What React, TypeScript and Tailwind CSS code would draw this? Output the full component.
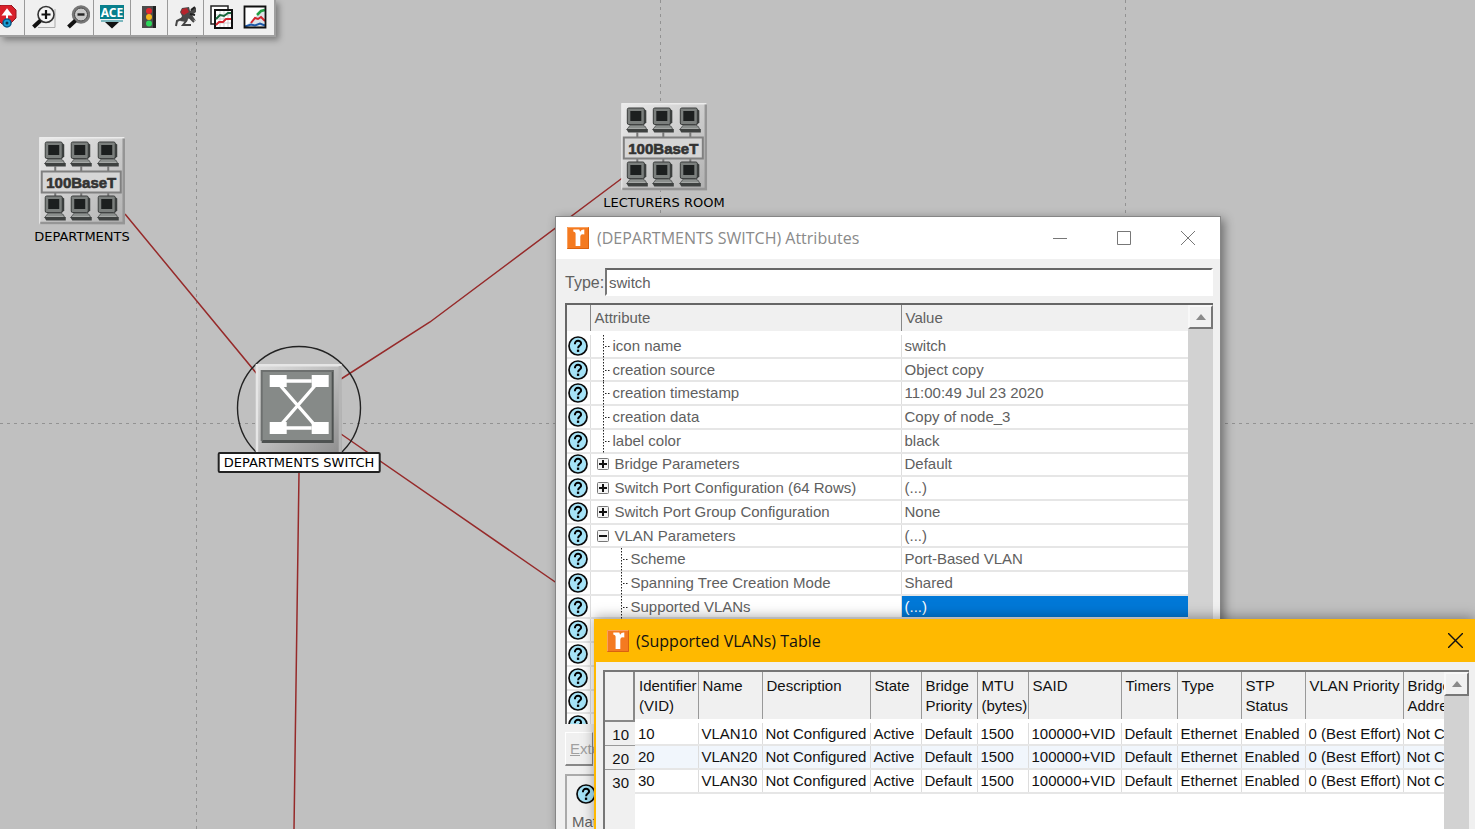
import type { ReactNode } from 'react';

type AttributeRow = {
    name: string;
    value: string;
    kind?: 'leaf' | 'plus' | 'minus' | 'child';
    selected?: boolean;
};

const attributes: AttributeRow[] = [
    { name: 'icon name', value: 'switch', kind: 'leaf' },
    { name: 'creation source', value: 'Object copy', kind: 'leaf' },
    { name: 'creation timestamp', value: '11:00:49 Jul 23 2020', kind: 'leaf' },
    { name: 'creation data', value: 'Copy of node_3', kind: 'leaf' },
    { name: 'label color', value: 'black', kind: 'leaf' },
    { name: 'Bridge Parameters', value: 'Default', kind: 'plus' },
    { name: 'Switch Port Configuration (64 Rows)', value: '(...)', kind: 'plus' },
    { name: 'Switch Port Group Configuration', value: 'None', kind: 'plus' },
    { name: 'VLAN Parameters', value: '(...)', kind: 'minus' },
    { name: 'Scheme', value: 'Port-Based VLAN', kind: 'child' },
    { name: 'Spanning Tree Creation Mode', value: 'Shared', kind: 'child' },
    { name: 'Supported VLANs', value: '(...)', kind: 'child', selected: true },
    { name: '', value: '' },
    { name: '', value: '' },
    { name: '', value: '' },
    { name: '', value: '' },
    { name: '', value: '' },
];

const vlanColumns = [
    { title: 'Identifier (VID)', width: 'w-[63px]' },
    { title: 'Name', width: 'w-[64px]' },
    { title: 'Description', width: 'w-[108px]' },
    { title: 'State', width: 'w-[51px]' },
    { title: 'Bridge Priority', width: 'w-[56px]' },
    { title: 'MTU (bytes)', width: 'w-[51px]' },
    { title: 'SAID', width: 'w-[93px]' },
    { title: 'Timers', width: 'w-[56px]' },
    { title: 'Type', width: 'w-[64px]' },
    { title: 'STP Status', width: 'w-[64px]' },
    { title: 'VLAN Priority', width: 'w-[98px]' },
    { title: 'Bridge Address', width: 'w-[72px]' },
];

const vlans = ['10', '20', '30'].map((id) => [
    id,
    `VLAN${id}`,
    'Not Configured',
    'Active',
    'Default',
    '1500',
    '100000+VID',
    'Default',
    'Ethernet',
    'Enabled',
    '0 (Best Effort)',
    'Not C',
]);

function HelpIcon() {
    return (
        <svg viewBox="0 0 20 20" className="size-5 shrink-0" aria-hidden="true">
            <circle cx="10" cy="10" r="9" fill="#a5e3f7" stroke="#0b0b0b" strokeWidth="1.7" />
            <path d="M6.9 8.2C6.7 3.6 13.3 3.7 13.1 7.6C13 9.6 10.2 9.6 10.1 12.2" fill="none" stroke="#000" strokeWidth="2" />
            <rect x="8.9" y="13.6" width="2.3" height="2.3" fill="#000" />
        </svg>
    );
}

function AppIcon() {
    return (
        <svg viewBox="0 0 22 22" className="size-[22px] shrink-0" aria-hidden="true">
            <rect width="22" height="22" fill="#f47a20" />
            <path d="M.5 21.5V.5h21" fill="none" stroke="#f9a15f" />
            <path d="M21.5 .5v21H.5" fill="none" stroke="#d9620f" />
            <path d="M6.300 2.500h6l.8 2.300Q14.500 2.300 17.300 2.600V7.400Q13.400 6.600 13.300 9.500V19H8.600V6.500Q8.600 4.800 6.300 4.400z" fill="#fff" />
        </svg>
    );
}

function Monitor({ x, y }: { x: number; y: number }) {
    return (
        <g transform={`translate(${x} ${y})`}>
            <path d="M17 1l3 2v12l-3 3z" fill="#3b3e3d" />
            <rect x="1" y=".5" width="17" height="16.500" rx="1.500" fill="#7b7f7d" stroke="#3a3d3c" />
            <rect x="4" y="3.500" width="11" height="10" fill="#1c1f1f" />
            <path d="M4 17.500h12l3 1.500 1.500 3H.5z" fill="#8b8f8d" stroke="#4a4d4c" strokeWidth=".8" />
            <path d="M0 21.500h21.500v3.500H2z" fill="#3e4140" />
            <path d="M2 21h17" stroke="#a5a8a6" />
        </g>
    );
}

function LanIcon() {
    return (
        <svg viewBox="0 0 86 87" className="h-[88px] w-[86px]" role="img" aria-label="100BaseT LAN">
            <defs>
                <linearGradient id="lan" x1="0" y1="0" x2="1" y2="1">
                    <stop offset="0" stopColor="#ebebeb" />
                    <stop offset="1" stopColor="#b0b0b0" />
                </linearGradient>
            </defs>
            <rect width="86" height="87" fill="url(#lan)" />
            <path d="M0 86V0h85" fill="none" stroke="#ececec" strokeWidth="2" />
            <path d="M84.500 1v84.500H1" fill="none" stroke="#959595" strokeWidth="2.500" />
            <path d="M16 29v5M42 29v5M69 29v5M16 54v5M42 54v5M69 54v5" stroke="#777" strokeWidth="2" />
            <Monitor x={5} y={4} />
            <Monitor x={31} y={4} />
            <Monitor x={58} y={4} />
            <Monitor x={5} y={58} />
            <Monitor x={31} y={58} />
            <Monitor x={58} y={58} />
            <rect x="2.500" y="34" width="79" height="21" fill="#d6d6d6" stroke="#808080" strokeWidth="2" />
            <text x="42" y="50" textAnchor="middle" fontSize="15" fontWeight="700" fill="#333" stroke="#333" strokeWidth=".6" fontFamily="Liberation Sans, sans-serif">
                100BaseT
            </text>
        </svg>
    );
}

function SwitchIcon() {
    return (
        <svg viewBox="0 0 86 88" className="h-[88px] w-[86px]" role="img" aria-label="Switch">
            <defs>
                <linearGradient id="plate" x1="0" y1="0" x2="1" y2="1">
                    <stop offset="0" stopColor="#dedede" />
                    <stop offset=".5" stopColor="#bdbdbd" />
                    <stop offset="1" stopColor="#8e8e8e" />
                </linearGradient>
            </defs>
            <rect width="86" height="88" fill="url(#plate)" />
            <path d="M0 1h86M1 0v88" stroke="#e6e6e6" strokeWidth="3" />
            <path d="M84.500 2v86" stroke="#b5b5b5" strokeWidth="3" />
            <path d="M6 6h72v73H6z" fill="#4e5251" />
            <path d="M6 6h70v70H6z" fill="#868a88" />
            <path d="M6 77V7h71" fill="none" stroke="#6d706f" strokeWidth="2" />
            <g stroke="#fff" strokeWidth="3.400">
                <path d="M30 17h26M30 64h26M25 22l34 39M59 22L25 61" />
            </g>
            <path d="M14 11h17v12H14zM56 11h17v12H56zM14 58h17v12H14zM56 58h17v12H56z" fill="#fff" />
        </svg>
    );
}

function ToolButton({ label, className, children }: { label: string; className: string; children: ReactNode }) {
    return (
        <button type="button" aria-label={label} className={`flex h-[34px] items-center justify-center ${className}`}>
            <svg viewBox="0 0 24 24" className="size-6" aria-hidden="true">
                {children}
            </svg>
        </button>
    );
}

function Toolbar() {
    return (
        <div className="absolute left-0 top-0 flex h-[37px] overflow-hidden border-b-2 border-r-2 border-[#a0a0a0] bg-[#f0f0f0] shadow-[3px_3px_6px_rgba(0,0,0,0.35)]">
            <ToolButton label="Recover" className="-ml-3 w-9">
                <path d="M7 0h10l5 5v8l-6 6H8l-6-6V5z" fill="#d9202a" stroke="#901820" />
                <path d="M13 15V6M9.500 9.500L13 5l3.500 4.500z" fill="#fff" stroke="#fff" strokeWidth="2" />
                <circle cx="13" cy="18" r="4" fill="#1aa0d8" stroke="#075a88" strokeWidth="1.500" />
                <circle cx="13" cy="18" r="1.500" fill="#0a3550" />
            </ToolButton>
            <div className="w-px bg-[#9a9a9a]" />
            <ToolButton label="Zoom in" className="w-[37px]">
                <path d="M6 22.500h17V4" fill="none" stroke="#aaa" />
                <circle cx="14" cy="9.500" r="8" fill="#f4f4f4" stroke="#333" strokeWidth="1.600" />
                <path d="M9.500 9.500h9M14 5v9" stroke="#111" strokeWidth="2.200" />
                <path d="M8.500 15.500L1.500 22" stroke="#111" strokeWidth="4" />
            </ToolButton>
            <ToolButton label="Zoom out" className="w-[31px]">
                <circle cx="15" cy="9.500" r="8" fill="#c8c8c8" stroke="#777" strokeWidth="2.500" />
                <circle cx="15" cy="9.500" r="6.500" fill="none" stroke="#444" />
                <path d="M11.500 9.500h7" stroke="#222" strokeWidth="2.400" />
                <path d="M9.500 15.500L2.500 22" stroke="#111" strokeWidth="4" />
            </ToolButton>
            <div className="w-px bg-[#9a9a9a]" />
            <ToolButton label="ACE" className="w-9">
                <rect x="0" y="0" width="24" height="14" fill="#087f8c" />
                <text x="12" y="11.500" textAnchor="middle" fontSize="12" fontWeight="700" fill="#fff" fontFamily="Noto Sans, sans-serif">
                    ACE
                </text>
                <path d="M1 16h22" stroke="#087f8c" />
                <path d="M5 17h14l-7 6.500z" fill="#111" />
            </ToolButton>
            <div className="w-px bg-[#9a9a9a]" />
            <ToolButton label="Run" className="w-9">
                <rect x="5" y="1" width="14" height="22" fill="#4b4b4b" />
                <path d="M17.500 1v22" stroke="#222" strokeWidth="3" />
                <circle cx="12" cy="6" r="3" fill="#e3262e" />
                <circle cx="12" cy="12" r="3" fill="#f4b51c" />
                <circle cx="12" cy="18.500" r="3" fill="#2cd65a" />
            </ToolButton>
            <div className="w-px bg-[#9a9a9a]" />
            <ToolButton label="Debug" className="w-[35px]">
                <path d="M8 3l7-1 1 4 4-4 2 1v4l-4 3 4 6-7-3-3 4-6-1 2-5-2-4z" fill="#4a4a4a" />
                <path d="M17 5l4-3M16 9l5 1" stroke="#222" strokeWidth="2" />
                <path d="M8 4l5-1 2 4-5 3-3-2z" fill="#b5242d" />
                <path d="M9 13l-6 3-1 5M13 15l-4 5h8M15 12l5 5" fill="none" stroke="#444" strokeWidth="2" />
            </ToolButton>
            <div className="w-px bg-[#9a9a9a]" />
            <ToolButton label="View results" className="w-9">
                <path d="M1 1h17v18H1z" fill="#fff" stroke="#222" strokeWidth="1.500" />
                <path d="M5 5h17v18H5z" fill="#fff" stroke="#111" strokeWidth="2" />
                <path d="M10 6v16M14 6v16M18 6v16M6 10h15M6 14h15M6 18h15" stroke="#bbb" strokeWidth=".7" />
                <path d="M6 14l4-4 4 1 4-3h3" fill="none" stroke="#17663b" strokeWidth="2" />
                <path d="M6 20l3-3h4l3-3h5" fill="none" stroke="#d3242e" strokeWidth="1.800" />
            </ToolButton>
            <ToolButton label="Compare results" className="mr-1 w-[30px]">
                <path d="M1.500 1.500h21v21h-21z" fill="#fff" />
                <path d="M2 22L22 2v20z" fill="#dfe3e8" />
                <path d="M14 10l4-4 4-1" fill="none" stroke="#23a044" strokeWidth="2.500" />
                <path d="M8 18l4-5 3 1 3-2 4 4" fill="none" stroke="#d3242e" strokeWidth="2" />
                <path d="M2 21.500l6-2 4 1 5-2 5 2" fill="none" stroke="#1c58a8" strokeWidth="2" />
                <path d="M1.500 1.500h21v21h-21z" fill="none" stroke="#111" strokeWidth="1.800" />
            </ToolButton>
        </div>
    );
}

function TreeMark({ kind }: { kind?: AttributeRow['kind'] }) {
    if (kind === 'plus' || kind === 'minus') {
        return (
            <svg viewBox="0 0 12 12" className="mx-1.5 size-3 shrink-0" aria-hidden="true">
                <rect x=".5" y=".5" width="11" height="11" rx="1" fill="#f4f4f4" stroke="#777" />
                <path d={kind === 'plus' ? 'M2 6h8M6 2v8' : 'M2 6h8'} stroke="#111" strokeWidth="2" />
            </svg>
        );
    }
    return (
        <svg viewBox="0 0 8 24" className={`mr-0.5 h-6 w-2 shrink-0 ${kind === 'child' ? 'ml-[30px]' : 'ml-3'}`} aria-hidden="true">
            <path d="M.5 1v23" stroke="#222" strokeDasharray="1.500 1.500" />
            <path d="M2 12.500h5" stroke="#222" strokeDasharray="1.500 1.500" />
        </svg>
    );
}

function ScrollBar() {
    return (
        <div className="w-[25px] shrink-0 bg-[#d2d2d2]">
            <button
                type="button"
                aria-label="Scroll up"
                className="flex h-6 w-full items-center justify-center border-2 border-b-[#777] border-l-[#f8f8f8] border-r-[#777] border-t-[#f8f8f8] bg-[#f0f0f0]"
            >
                <span className="border-x-[5px] border-b-[6px] border-x-transparent border-b-[#8a8a8a]" />
            </button>
        </div>
    );
}

function AttributesWindow() {
    return (
        <section className="absolute bottom-0 left-[555px] top-[216px] flex w-[666px] flex-col overflow-hidden border border-b-0 border-[#868686] bg-[#f0f0f0] text-[#606060] shadow-[3px_3px_10px_rgba(0,0,0,0.45)]">
            <header className="flex h-[42px] shrink-0 items-center bg-white pl-[11px]">
                <AppIcon />
                <h1 className="ml-2 font-['Open_Sans',sans-serif] text-base text-[#8a8a8a]">(DEPARTMENTS SWITCH) Attributes</h1>
                <div className="ml-auto flex">
                    <button type="button" aria-label="Minimize" className="flex h-10 w-16 items-center justify-center">
                        <svg viewBox="0 0 14 14" className="size-3.5"><path d="M0 7.500h14" stroke="#777" /></svg>
                    </button>
                    <button type="button" aria-label="Maximize" className="flex h-10 w-16 items-center justify-center">
                        <svg viewBox="0 0 14 14" className="size-3.5"><path d="M.5 .5h13v13H.5z" fill="none" stroke="#777" /></svg>
                    </button>
                    <button type="button" aria-label="Close" className="flex h-10 w-16 items-center justify-center">
                        <svg viewBox="0 0 14 14" className="size-3.5"><path d="M0 0l14 14M14 0L0 14" stroke="#777" /></svg>
                    </button>
                </div>
            </header>
            <div className="flex min-h-0 flex-1 flex-col pl-[9px] pr-[7px] pt-[9px]">
                <div className="flex h-7 shrink-0 items-center">
                    <label htmlFor="type" className="w-10 shrink-0 pt-0.5 text-base">Type:</label>
                    <input
                        id="type"
                        defaultValue="switch"
                        className="h-7 min-w-0 flex-1 border-2 border-b-white border-l-[#777] border-r-white border-t-[#666] bg-white px-0.5 outline-none"
                    />
                </div>
                {/* Attribute tree */}
                <div className="mt-[7px] flex h-[421px] shrink-0 overflow-hidden border-l-2 border-t-2 border-[#666]">
                    <div className="min-w-0 flex-1 overflow-hidden bg-white">
                        <table className="h-[433px] w-full table-fixed border-collapse">
                            <thead>
                                <tr className="h-7 border-b-4 border-white bg-[#f0f0f0] text-left">
                                    <th className="w-[23px] border-r border-[#888] p-0" aria-label="Help" />
                                    <th className="w-[311px] border-r border-[#888] p-0 pl-1 font-normal">Attribute</th>
                                    <th className="p-0 pl-1 font-normal">Value</th>
                                </tr>
                            </thead>
                            <tbody>
                                {attributes.map((row, i) => (
                                    <tr key={i} className="border-b-2 border-[#e6e6e6]">
                                        <td className="border-r border-[#ddd] p-0 leading-none">
                                            <div className="flex h-5 items-center pl-px"><HelpIcon /></div>
                                        </td>
                                        <td className="border-r border-[#ddd] p-0">
                                            <div className="flex h-[21px] items-center whitespace-nowrap">
                                                {row.kind && <TreeMark kind={row.kind} />}
                                                {row.name}
                                            </div>
                                        </td>
                                        <td className={row.selected ? 'bg-[#0078d7] p-0 pl-[3px] text-white' : 'p-0 pl-[3px]'}>
                                            {row.value}
                                        </td>
                                    </tr>
                                ))}
                            </tbody>
                        </table>
                    </div>
                    <ScrollBar />
                </div>
                {/* Only the part left of the front window is visible */}
                <button type="button" className="mt-2 h-[34px] w-7 shrink-0 border border-b-2 border-[#888] border-l-white border-t-white pl-1 text-left text-[#a0a0a0]">
                    <u>E</u>xte
                </button>
                <div className="mt-2 flex min-h-0 flex-1 flex-col overflow-hidden border-l-2 border-t-2 border-[#aaa] pl-[9px] pt-2">
                    <HelpIcon />
                    <span className="-ml-1 mt-2 whitespace-nowrap">Mat</span>
                </div>
            </div>
        </section>
    );
}

function VlanWindow() {
    return (
        <section className="absolute bottom-0 left-[594px] right-0 top-[619px] flex flex-col overflow-hidden border-l-2 border-[#ffb900] bg-[#f0f0f0] text-[#111] shadow-[0_-2px_12px_rgba(0,0,0,0.35)]">
            <header className="flex h-[43px] shrink-0 items-center bg-[#ffb900] pl-[11px] pr-3">
                <AppIcon />
                <h2 className="ml-[7px] font-['Open_Sans',sans-serif] text-base">(Supported VLANs) Table</h2>
                <button type="button" aria-label="Close" className="ml-auto">
                    <svg viewBox="0 0 15 15" className="size-[15px]"><path d="M0 0l15 15M15 0L0 15" stroke="#111" strokeWidth="1.400" /></svg>
                </button>
            </header>
            <div className="ml-[7px] mr-1.5 mt-2 flex min-h-0 flex-1 border-l-2 border-t-2 border-[#777] bg-white">
                <div className="min-w-0 flex-1 overflow-hidden">
                    <div className="flex h-full">
                        {/* Row numbers */}
                        <div className="w-[30px] shrink-0 bg-[#f0f0f0]">
                            <div className="h-[50px] border-b-2 border-r-2 border-[#888]" />
                            {vlans.map((row) => (
                                <div key={row[0]} className="flex h-6 items-center justify-end border-b border-[#999] pr-1.5 pt-0.5 last:border-0">{row[0]}</div>
                            ))}
                        </div>
                        <table className="w-[840px] shrink-0 table-fixed border-collapse self-start">
                            <thead>
                                <tr className="h-[49px] border-b-4 border-white bg-[#f0f0f0] text-left align-top">
                                    {vlanColumns.map((column) => (
                                        <th key={column.title} className={`border-r border-[#999] p-0 pl-1 pt-1 font-normal leading-5 ${column.width}`}>
                                            {column.title}
                                        </th>
                                    ))}
                                </tr>
                            </thead>
                            <tbody>
                                {vlans.map((row) => (
                                    <tr key={row[0]} className="h-6 border-b-2 border-[#e6e6e6] even:bg-[#f1f6fc]">
                                        {row.map((cell, i) => (
                                            <td key={i} className="whitespace-nowrap border-r border-[#ddd] p-0 pl-[3px]">{cell}</td>
                                        ))}
                                    </tr>
                                ))}
                            </tbody>
                        </table>
                    </div>
                </div>
                <ScrollBar />
            </div>
        </section>
    );
}

export default function App() {
    return (
        <main className="relative h-screen overflow-hidden bg-[#c0c0c0] font-['Liberation_Sans',sans-serif] text-[15px] leading-5">
            {/* Grid and links */}
            <svg className="absolute inset-0 h-full w-full" aria-hidden="true">
                <g stroke="#929292" strokeDasharray="3 4">
                    <path d="M196.500 0v2000M660.500 0v2000M1125.500 0v2000M0 423.500h4000" />
                </g>
                <g fill="none" stroke="#962a2a" strokeWidth="1.500">
                    <path d="M125 214L262 380M341 379L430 322L625 176M341 434L561 586M299 473L294 829V2000" />
                </g>
                <circle cx="299" cy="408" r="61.500" fill="none" stroke="#222" strokeWidth="1.400" />
            </svg>

            {/* Nodes */}
            <div className="absolute left-[82px] top-[137px] flex -translate-x-1/2 flex-col items-center font-['DejaVu_Sans',sans-serif] text-[13px] text-black">
                <LanIcon />
                <span className="mt-0.5">DEPARTMENTS</span>
            </div>
            <div className="absolute left-[664px] top-[103px] flex -translate-x-1/2 flex-col items-center whitespace-nowrap font-['DejaVu_Sans',sans-serif] text-[13px] text-black">
                <LanIcon />
                <span className="mt-0.5">LECTURERS ROOM</span>
            </div>
            <div className="absolute left-[299px] top-[364px] flex -translate-x-1/2 flex-col items-center whitespace-nowrap font-['DejaVu_Sans',sans-serif] text-[13px] text-black">
                <SwitchIcon />
                <span className="rounded-xs border-2 border-[#222] bg-white px-1 leading-[17px]">DEPARTMENTS SWITCH</span>
            </div>

            <Toolbar />
            <AttributesWindow />
            <VlanWindow />
        </main>
    );
}
